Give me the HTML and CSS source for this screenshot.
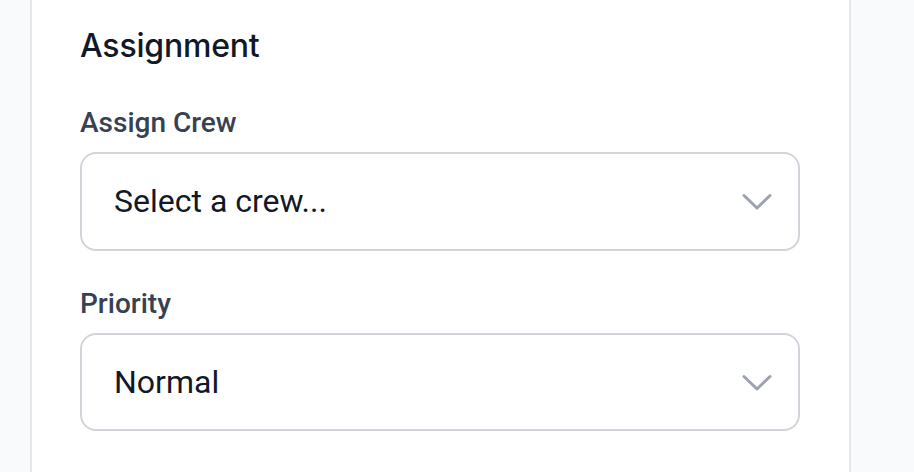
FILE: index.html
```html
<!DOCTYPE html>
<html lang="en">
<head>
<meta charset="utf-8">
<title>Assignment</title>
<link rel="stylesheet" href="styles.css">
</head>
<body>
<div class="page">
  <section class="card">
    <h2 class="card-title">Assignment</h2>
    <div class="field">
      <div class="field-label">Assign Crew</div>
      <div class="select" role="combobox">
        <span class="select-value">Select a crew...</span>
        <svg class="chevron" width="32" height="20" viewBox="0 0 32 20" aria-hidden="true">
          <polyline points="3,3.5 16,16 29,3.5" fill="none" stroke="#9ca3af" stroke-width="3" stroke-linecap="round" stroke-linejoin="round"/>
        </svg>
      </div>
    </div>
    <div class="field">
      <div class="field-label">Priority</div>
      <div class="select" role="combobox">
        <span class="select-value">Normal</span>
        <svg class="chevron" width="32" height="20" viewBox="0 0 32 20" aria-hidden="true">
          <polyline points="3,3.5 16,16 29,3.5" fill="none" stroke="#9ca3af" stroke-width="3" stroke-linecap="round" stroke-linejoin="round"/>
        </svg>
      </div>
    </div>
  </section>
</div>
</body>
</html>
```
FILE: styles.css
```css
html, body {
  margin: 0;
  padding: 0;
  background: #f9fafb;
  height: 100%;
  overflow: hidden;
}
.page {
  padding-left: 30px;
  display: flex;
  height: 100%;
}
.card {
  box-sizing: border-box;
  width: 821px;
  height: 100%;
  background: #ffffff;
  border-left: 2px solid #e5e7eb;
  border-right: 2px solid #e5e7eb;
  padding: 22px 49px 0 48px;
  display: flex;
  flex-direction: column;
  gap: 32px;
}
.card-title {
  margin: 0;
  font-family: Inter, "Liberation Sans", sans-serif;
  font-weight: 500;
  font-size: 32px;
  line-height: 48px;
  color: #111827;
  letter-spacing: -0.2px;
}
.field {
  display: flex;
  flex-direction: column;
}
.field-label {
  font-family: Roboto, "Liberation Sans", sans-serif;
  font-weight: 500;
  font-size: 28px;
  line-height: 42px;
  color: #374151;
  margin-bottom: 8px;
}
.select {
  box-sizing: border-box;
  height: 98.5px;
  border: 2px solid #d1d5db;
  border-radius: 16px;
  background: #ffffff;
  display: flex;
  align-items: center;
  justify-content: space-between;
  padding: 0 25px 0 32px;
}
.select-value {
  font-family: Roboto, "Liberation Sans", sans-serif;
  font-size: 32px;
  color: #111827;
}
.chevron {
  display: block;
  margin-top: 2px;
}
```
